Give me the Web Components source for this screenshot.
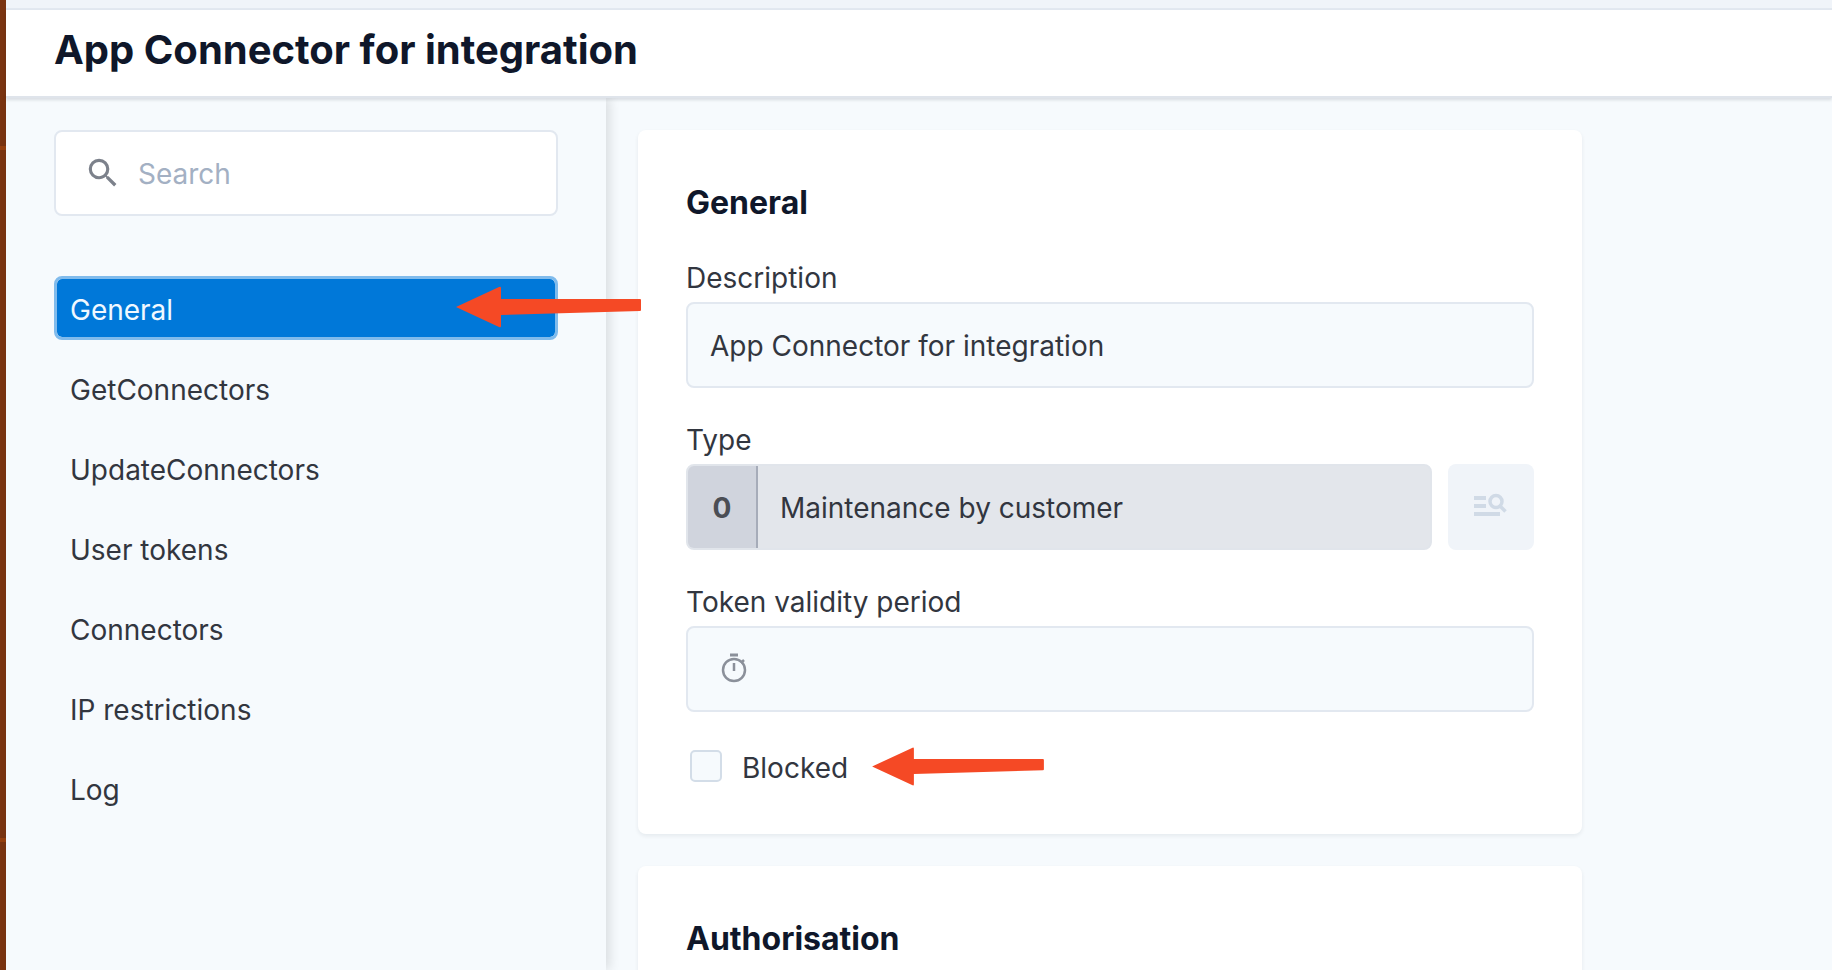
<!DOCTYPE html>
<html lang="en">
<head>
<meta charset="utf-8">
<meta name="viewport" content="width=device-width, initial-scale=1">
<title>App Connector for integration</title>
<style>
  :root {
    --canvas: #f6fafd;
    --line: #e2e8f0;
    --ink: #32363f;
    --heading: #0f172a;
    --accent: #0078d9;
    --marker: #f54925;
  }
  html, body { height: 100%; }
  body {
    margin: 0;
    overflow: hidden;
    background: var(--canvas);
    color: var(--ink);
    font: 400 28px/40px Inter, "Liberation Sans", sans-serif;
  }
</style>
</head>
<body>
<app-shell>
  <page-header slot="header">App Connector for integration</page-header>
  <side-nav slot="nav">
    <nav-item current>General<callout-arrow></callout-arrow></nav-item>
    <nav-item>GetConnectors</nav-item>
    <nav-item>UpdateConnectors</nav-item>
    <nav-item>User tokens</nav-item>
    <nav-item>Connectors</nav-item>
    <nav-item>IP restrictions</nav-item>
    <nav-item>Log</nav-item>
  </side-nav>
  <form-card heading="General">
    <text-field label="Description" value="App Connector for integration"></text-field>
    <lookup-field label="Type" code="0" value="Maintenance by customer"></lookup-field>
    <duration-field label="Token validity period"></duration-field>
    <check-field label="Blocked"><callout-arrow></callout-arrow></check-field>
  </form-card>
  <form-card heading="Authorisation"></form-card>
</app-shell>

<script>
const define = (name, render) => customElements.define(name, class extends HTMLElement {
  constructor() {
    super();
    this.attachShadow({ mode: "open" });
  }
  connectedCallback() {
    const template = document.createElement("template");
    template.innerHTML = render(this);
    this.shadowRoot.replaceChildren(template.content.cloneNode(true));
  }
});

const fieldStyles = `
  :host { display: block; }
  * { box-sizing: border-box; }
  label { display: block; margin-bottom: 4px; }
  input { font: inherit; color: inherit; }
  .box {
    width: 100%; height: 86px; border: 2px solid var(--line);
    border-radius: 8px; background: var(--canvas);
  }
`;

define("app-shell", () => `
  <style>
    :host { display: grid; grid-template-columns: 6px minmax(0, 1fr); height: 100%; }
    .rail { display: flex; flex-direction: column; background: #7a3411; box-shadow: 1px 0 #d3c5bf; }
    .rail::before, .rail::after { content: ""; height: 4px; background: #96400f; }
    .rail::before { margin-top: 146px; }
    .rail::after { margin-top: 688px; }
    .page { display: flex; flex-direction: column; min-height: 0; }
    .strip { flex: none; box-sizing: border-box; height: 10px; background: #f0f4f9; border-bottom: 2px solid var(--line); }
    .columns { flex: 1; display: flex; min-height: 0; }
    ::slotted([slot="nav"]) { flex: 0 0 min(600px, 40%); min-width: 0; }
    main { flex: 1; min-width: 0; display: flex; flex-direction: column; gap: 32px; padding: 32px; overflow: hidden; }
  </style>
  <div class="rail"></div>
  <div class="page">
    <div class="strip"></div>
    <slot name="header"></slot>
    <div class="columns">
      <slot name="nav"></slot>
      <main><slot></slot></main>
    </div>
  </div>
`);

define("page-header", () => `
  <style>
    :host {
      display: block; flex: none; position: relative; z-index: 2; padding: 16px 48px 22px;
      background: #fff; border-bottom: 2px solid #dfe4eb; box-shadow: 0 2px 3px #0f172a20;
    }
    h1 { margin: 0; font-size: 40px; line-height: 48px; font-weight: 700; color: var(--heading); }
  </style>
  <h1><slot></slot></h1>
`);

define("side-nav", () => `
  <style>
    :host {
      display: block; box-sizing: border-box; position: relative; z-index: 1;
      padding: 32px 48px; background: var(--canvas); box-shadow: 4px 0 10px #0000001c;
    }
    .search {
      display: flex; align-items: center; gap: 16px; box-sizing: border-box; height: 86px;
      padding: 0 28px; border: 2px solid var(--line); border-radius: 8px; background: #fff;
    }
    svg { flex: none; width: 38px; height: 38px; fill: #7c818b; }
    input { flex: 1; min-width: 0; padding: 2px 0 0; border: 0; outline: 0; background: none; font: inherit; color: inherit; }
    input::placeholder { color: #a3b0c3; opacity: 1; }
    nav { display: flex; flex-direction: column; gap: 16px; margin-top: 60px; }
  </style>
  <div class="search">
    <svg viewBox="0 0 24 24" aria-hidden="true"><path d="M15.5 14h-.79l-.28-.27A6.47 6.47 0 0 0 16 9.5 6.5 6.5 0 1 0 9.500 16c1.610 0 3.090-.59 4.230-1.570l.27.28v.79l5 4.990L20.490 19l-4.990-5zm-6 0C7.010 14 5 11.990 5 9.500S7.010 5 9.500 5 14 7.010 14 9.500 11.990 14 9.500 14z"/></svg>
    <input type="search" placeholder="Search" aria-label="Search">
  </div>
  <nav aria-label="Sections"><slot></slot></nav>
`);

define("nav-item", host => `
  <style>
    :host { display: block; position: relative; }
    a {
      display: block; padding: 11px 13px 7px; border: 3px solid transparent; border-radius: 8px;
      color: inherit; text-decoration: none;
    }
    :host([current]) a { color: #f0f8ff; background: var(--accent) padding-box; border-color: #80bbec; }
    ::slotted(callout-arrow) { position: absolute; left: 402px; top: 10px; }
  </style>
  <a href="#${host.textContent.trim().toLowerCase().replace(/\s+/g, "-")}" ${host.hasAttribute("current") ? 'aria-current="page"' : ""}><slot></slot></a>
`);

define("form-card", host => `
  <style>
    :host {
      display: block; box-sizing: border-box; width: 100%; max-width: 944px; flex: none;
      padding: 48px 48px 46px; border-radius: 8px; background: #fff; box-shadow: 0 2px 4px #0f172a12;
    }
    h2 { margin: 0; font-size: 32px; line-height: 50px; font-weight: 700; color: var(--heading); }
    .fields { display: flex; flex-direction: column; gap: 32px; margin-top: 30px; }
    .fields:not(.filled) { display: none; }
  </style>
  <h2>${host.getAttribute("heading")}</h2>
  <div class="fields ${host.children.length ? "filled" : ""}"><slot></slot></div>
`);

define("text-field", host => `
  <style>${fieldStyles}
    input { padding: 2px 22px 0; }
  </style>
  <label for="control">${host.getAttribute("label")}</label>
  <input class="box" id="control" type="text" value="${host.getAttribute("value")}">
`);

define("lookup-field", host => `
  <style>${fieldStyles}
    .row { display: flex; gap: 16px; }
    .value { flex: 1; min-width: 0; display: flex; height: 86px; border: 2px solid #e1e5eb; border-radius: 8px; background: #e3e6eb; overflow: hidden; }
    .code { flex: none; width: 70px; padding-top: 2px; display: grid; place-items: center; background: #d0d4dd; border-right: 2px solid #a6acb9; font-weight: 700; color: #4b4e55; }
    input { flex: 1; min-width: 0; padding: 2px 22px 0; border: 0; background: none; }
    button { flex: none; width: 86px; height: 86px; padding: 0; border: 0; border-radius: 8px; background: #f0f4f9; display: grid; place-items: center; }
    svg { width: 34px; height: 30px; fill: none; stroke: #d0dae6; stroke-width: 4; }
  </style>
  <label for="control">${host.getAttribute("label")}</label>
  <div class="row">
    <div class="value">
      <span class="code">${host.getAttribute("code")}</span>
      <input id="control" type="text" readonly value="${host.getAttribute("value")}">
    </div>
    <button type="button" disabled aria-label="Look up type">
      <svg viewBox="0 0 34 30"><path d="M0 6h12M0 14h12M0 22h26"/><circle cx="22" cy="9.500" r="6" stroke-width="3.500"/><path d="M26 14l5.500 5.500" stroke-width="3.500"/></svg>
    </button>
  </div>
`);

define("duration-field", host => `
  <style>${fieldStyles}
    .box { display: flex; align-items: center; gap: 16px; padding: 0 28px; }
    svg { flex: none; width: 36px; height: 36px; fill: none; stroke: #8b909a; stroke-width: 2.500; }
    input { flex: 1; min-width: 0; padding: 0; border: 0; outline: 0; background: none; }
  </style>
  <label for="control">${host.getAttribute("label")}</label>
  <div class="box">
    <svg viewBox="0 0 36 36" aria-hidden="true"><circle cx="18" cy="19" r="11"/><path d="M18 12v8M25 12l3-3"/><path d="M14 4h8" stroke-width="3"/></svg>
    <input id="control" type="text">
  </div>
`);

define("check-field", host => `
  <style>
    :host { display: flex; align-items: center; height: 44px; padding: 0 4px; }
    label { display: flex; align-items: center; gap: 20px; }
    span { padding-top: 4px; }
    input { appearance: none; box-sizing: border-box; width: 32px; height: 32px; margin: 0; border: 2px solid #d3dde8; border-radius: 5px; background: var(--canvas); }
    ::slotted(callout-arrow) { width: 174px; height: 39px; margin-left: 23px; }
  </style>
  <label><input type="checkbox"><span>${host.getAttribute("label")}</span></label>
  <slot></slot>
`);

define("callout-arrow", () => `
  <style>
    :host { display: block; width: 185px; height: 42px; }
    svg { display: block; width: 100%; height: 100%; fill: var(--marker); }
  </style>
  <svg viewBox="0 0 185 42" aria-hidden="true"><path d="M0 21L43 1q2-1 2 1V13H184q1 0 1 1V24q0 1-1 1L45 29V40q0 2-2 1Z"/></svg>
`);
</script>
</body>
</html>
